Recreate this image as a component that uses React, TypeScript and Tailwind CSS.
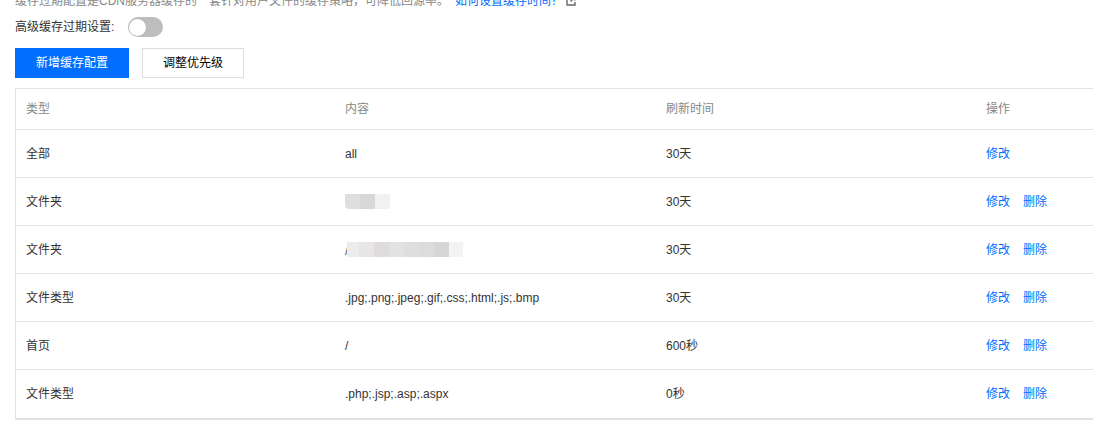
import React from "react";

const rows: { type: string; content: React.ReactNode; time: string; del: boolean }[] = [
  { type: "全部", content: "all", time: "30天", del: false },
  {
    type: "文件夹",
    content: (
      <span className="flex h-[15px] items-stretch">
        <span className="w-[15px] rounded-bl-[4px] bg-[#dedede]" />
        <span className="w-[15px] bg-[#d7d7d7]" />
        <span className="w-[15px] bg-[#f1f1f1]" />
      </span>
    ),
    time: "30天",
    del: true,
  },
  {
    type: "文件夹",
    content: (
      <span className="flex h-[15px] items-stretch">
        <span className="text-[#555]">/</span>
        <span className="ml-[-1px] w-[12px] bg-[#ececec]" />
        <span className="w-[15px] bg-[#e6e6e6]" />
        <span className="w-[15px] bg-[#e0dcdc]" />
        <span className="w-[15px] bg-[#e2e2e4]" />
        <span className="w-[15px] bg-[#dedede]" />
        <span className="w-[15px] bg-[#dcdcdc]" />
        <span className="w-[15px] bg-[#d6d6d6]" />
        <span className="w-[14px] bg-[#f3f3f3]" />
      </span>
    ),
    time: "30天",
    del: true,
  },
  { type: "文件类型", content: ".jpg;.png;.jpeg;.gif;.css;.html;.js;.bmp", time: "30天", del: true },
  { type: "首页", content: "/", time: "600秒", del: true },
  { type: "文件类型", content: ".php;.jsp;.asp;.aspx", time: "0秒", del: true },
];

export default function App() {
  return (
    <div
      className="h-[444px] w-[1093px] overflow-hidden bg-white text-[12px] text-[#333]"
      style={{ fontFamily: '"Liberation Sans", Arial, "Noto Sans CJK SC", sans-serif' }}
    >
      <div className="pl-[15px]">
        <div className="mt-[-9px] flex h-[20px] items-center leading-[20px] text-[#888]">
          <span>缓存过期配置是CDN服务器缓存的一套针对用户文件的缓存策略，可降低回源率。</span>
          <span className="ml-[6px] text-[#006eff]">如何设置缓存时间？</span>
          <svg className="ml-[3px]" width="10" height="10" viewBox="0 0 10 10" fill="none">
            <path d="M4 1H1v8h8V6" stroke="#666" strokeWidth="1.4" />
            <path d="M5.5 1H9v3.5M9 1L4.5 5.5" stroke="#666" strokeWidth="1.4" />
          </svg>
        </div>
        <div className="mt-[6px] flex h-[20px] items-center">
          <span className="text-[#333]">高级缓存过期设置:</span>
          <span className="ml-[14px] flex h-[20px] w-[35px] items-center rounded-full bg-[#bdbdbd] px-[1px]">
            <span className="h-[17px] w-[17px] rounded-full bg-white shadow-[0_0_1px_rgba(0,0,0,0.2)]" />
          </span>
        </div>
        <div className="mt-[11px] flex h-[30px] gap-[13px]">
          <button className="h-[30px] w-[114px] bg-[#006eff] text-[12px] text-white">新增缓存配置</button>
          <button className="h-[30px] w-[102px] border border-[#dddddd] bg-white text-[12px] text-[#000]">
            调整优先级
          </button>
        </div>
        <div className="mt-[10px] w-[1282px] border-t border-l border-[#e2e2e2] border-b-2 border-b-[#e0e0e0]">
          <div className="grid h-[41px] grid-cols-[320px_320px_320px_320px] items-center border-b border-[#e2e2e2] text-[#888]">
            <div className="pl-[10px]">类型</div>
            <div className="pl-[9px]">内容</div>
            <div className="pl-[10px]">刷新时间</div>
            <div className="pl-[10px]">操作</div>
          </div>
          {rows.map((r, i) => (
            <div
              key={i}
              className={`grid h-[48px] grid-cols-[320px_320px_320px_320px] items-center ${
                i < rows.length - 1 ? "border-b border-[#e2e2e2]" : ""
              }`}
            >
              <div className="pl-[10px]">{r.type}</div>
              <div className="flex pl-[9px]">{r.content}</div>
              <div className="pl-[10px]">{r.time}</div>
              <div className="flex gap-[13px] pl-[10px] text-[#006eff]">
                <span>修改</span>
                {r.del && <span>删除</span>}
              </div>
            </div>
          ))}
        </div>
      </div>
    </div>
  );
}
